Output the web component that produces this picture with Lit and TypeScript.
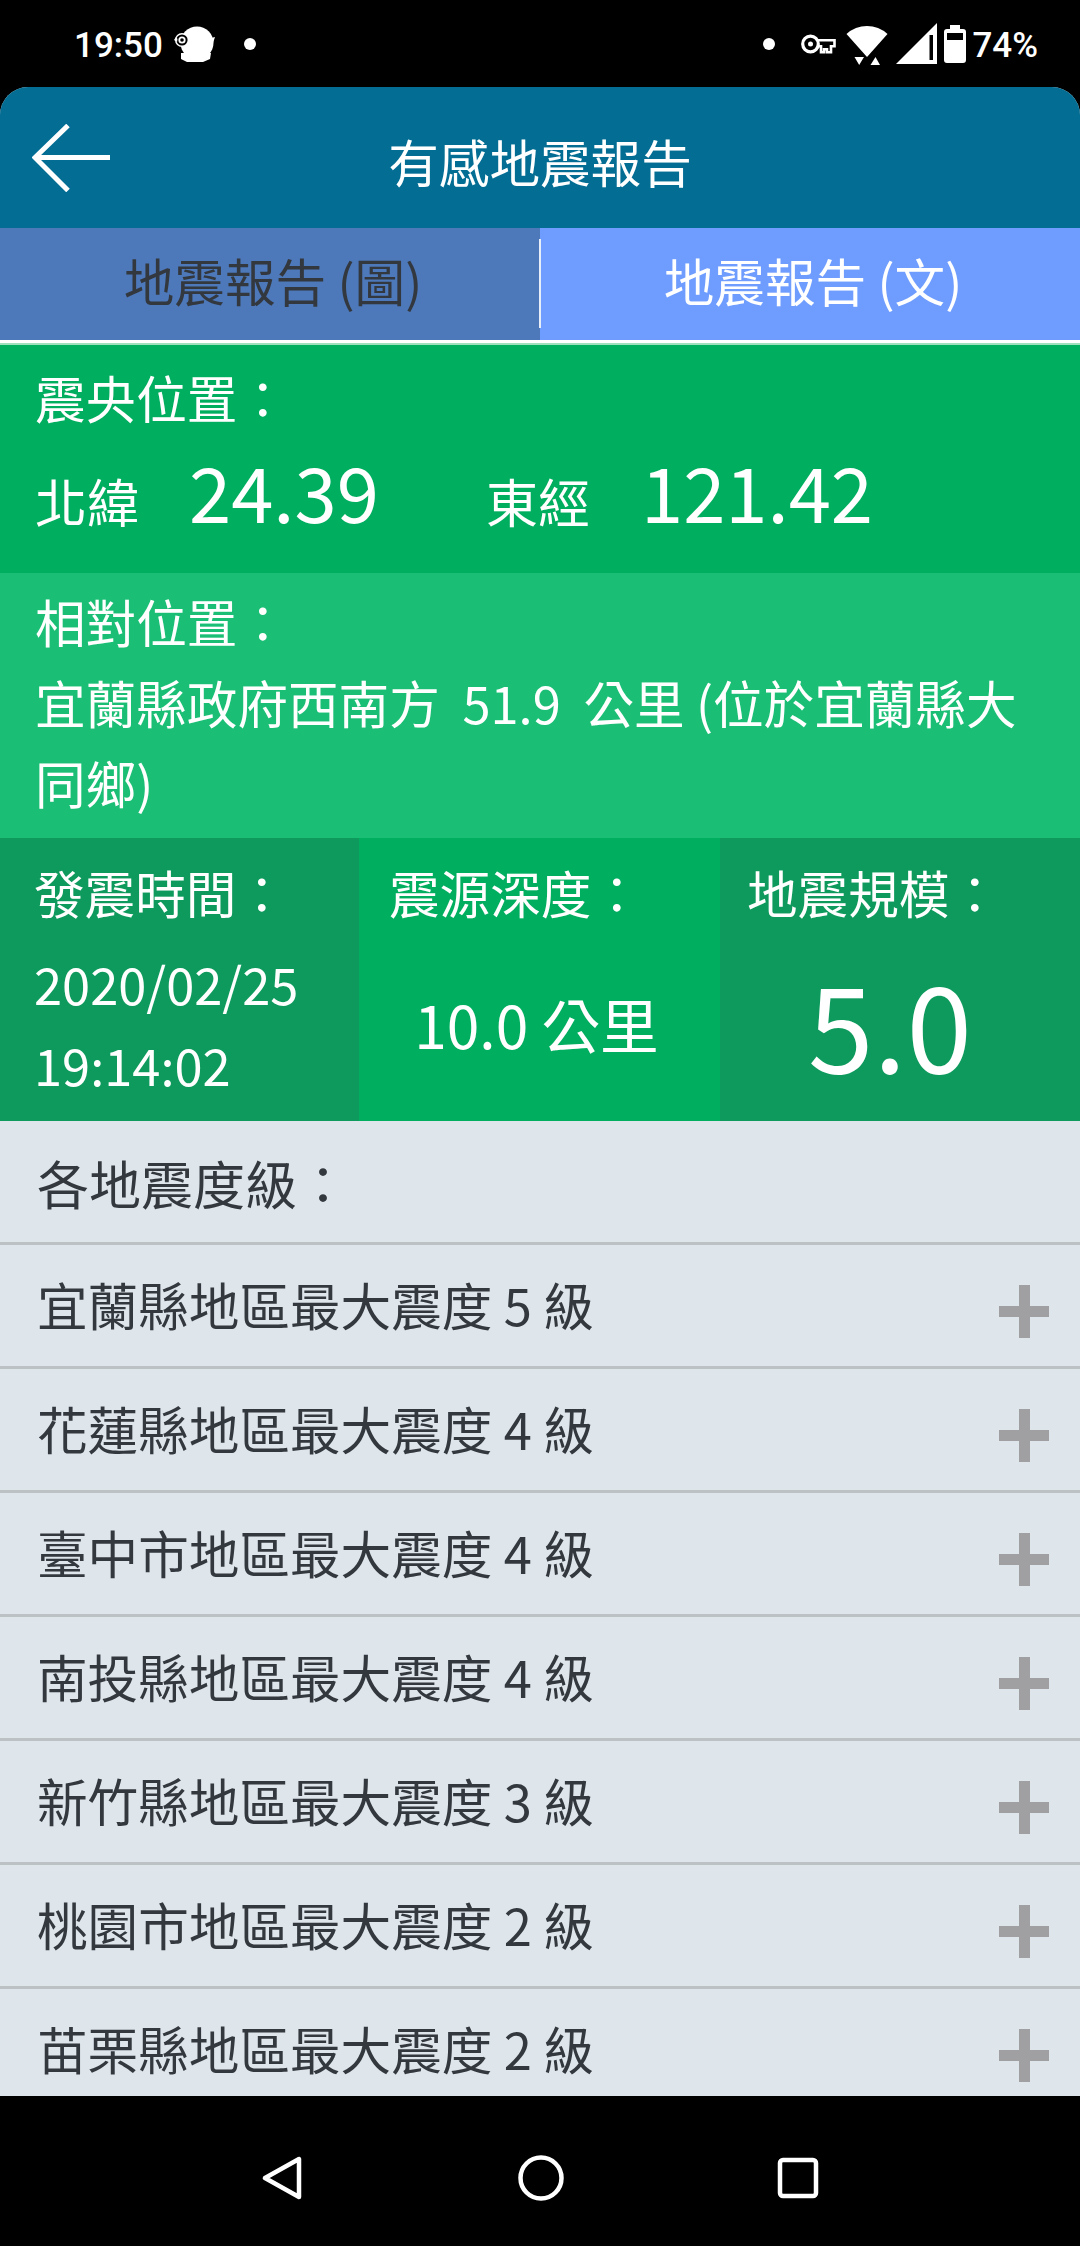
import { LitElement, html, css, svg } from 'lit';
import { customElement } from 'lit/decorators.js';

const REGIONS = [
  ['宜蘭縣', 5],
  ['花蓮縣', 4],
  ['臺中市', 4],
  ['南投縣', 4],
  ['新竹縣', 3],
  ['桃園市', 2],
  ['苗栗縣', 2],
];

const mascotIcon = svg`<svg class="mascot" width="41" height="36" viewBox="0 0 41 36">
  <circle cx="23" cy="17" r="16.500" fill="#fff"/>
  <path d="M7 27h30l-1 6-7 3H13l-6-3zM37 12l4-1-2 6-3 1z" fill="#fff"/>
  <circle cx="8" cy="14" r="7" fill="#fff"/>
  <circle cx="8" cy="14" r="5.600" fill="#000"/>
  <circle cx="8" cy="14" r="3.600" fill="#fff"/>
  <circle cx="8" cy="14" r="1.800" fill="#000"/>
  <path d="M0 14l2-3 1.500 2-.5 3z" fill="#fff"/>
</svg>`;

const keyIcon = svg`<svg class="key" width="35" height="20" viewBox="0 0 35 20">
  <circle cx="9.500" cy="10" r="7.800" fill="none" stroke="#fff" stroke-width="3.200"/>
  <circle cx="9.500" cy="10" r="2.500" fill="#fff"/>
  <path d="M17 6.300h16.500v6h-3.500v6h-4v-3h-3v3h-3v-6H17" fill="none" stroke="#fff" stroke-width="2.600"/>
</svg>`;

const wifiIcon = svg`<svg class="wifi" width="42" height="43" viewBox="0 0 42 43">
  <path d="M.5 12A30 30 0 0 1 41.500 12L21 35z" fill="#fff"/>
  <path d="M8.500 35H18l-4.800 8zM29.500 35L24.500 43H34z" fill="#fff"/>
</svg>`;

const signalIcon = svg`<svg class="signal" width="41" height="41" viewBox="0 0 41 41">
  <path fill-rule="evenodd" d="M0 41 41 0V41zM33.500 12V37H37V12z" fill="#fff"/>
</svg>`;

const batteryIcon = svg`<svg class="battery" width="22" height="38" viewBox="0 0 22 38">
  <path fill-rule="evenodd" d="M6 0H16V4h3a3 3 0 0 1 3 3V35a3 3 0 0 1-3 3H3a3 3 0 0 1-3-3V7A3 3 0 0 1 3 4H6zM3 8v7H19V8z" fill="#fff"/>
</svg>`;

@customElement('app-root')
export class AppRoot extends LitElement {
  static styles = css`
    :host {
      display: block;
      width: 1080px;
      height: 2246px;
      background: #000;
      overflow: hidden;
      font-family: 'Noto Sans CJK TC', 'Noto Sans', sans-serif;
      font-size: 50.6px;
    }

    .status {
      height: 87px;
      display: flex;
      align-items: center;
      padding: 0 42px 0 74px;
      color: #fff;
      font-family: Roboto, sans-serif;
      font-size: 35px;
      font-weight: 500;
    }
    .status .time { margin-right: 11px; padding-top: 3px; }
    .mascot { margin-right: 29px; }
    .dot {
      width: 12px;
      height: 12px;
      border-radius: 50%;
      background: #fff;
    }
    .status .spacer { flex: 1; }
    .status .right {
      display: flex;
      align-items: center;
    }
    .status .right .key { margin-left: 26px; }
    .status .right .wifi { margin-left: 10px; }
    .status .right .signal { margin-left: 8px; }
    .status .right .battery { margin-left: 7px; }
    .status .pct { margin-left: 6px; padding-top: 3px; }

    .app {
      height: 2009px;
      border-radius: 28px 28px 0 0;
      overflow: hidden;
      background: #dee5eb;
    }

    .header {
      position: relative;
      height: 141px;
      box-sizing: border-box;
      padding-top: 8px;
      background: #036d94;
      color: #fff;
      display: flex;
      align-items: center;
      justify-content: center;
    }
    .header .back {
      position: absolute;
      left: 32px;
      top: 37px;
    }
    .header .title { line-height: 1; }

    .tabs {
      display: grid;
      grid-template-columns: 540px 540px;
      height: 112px;
      border-bottom: 3px solid #fff;
      box-shadow: 0 2px 0 #9fe0bd;
      position: relative;
      z-index: 1;
    }
    .tabs::after {
      content: '';
      position: absolute;
      left: 539px;
      top: 11px;
      width: 2px;
      height: 89px;
      background: #e8eef8;
    }
    .tab {
      display: flex;
      align-items: center;
      justify-content: center;
      line-height: 1;
      padding: 0 0 8px 6px;
    }
    .tab.off {
      background: #4d78b9;
      color: #33383f;
    }
    .tab.on {
      background: #6f9dff;
      color: #fff;
    }

    .epicentre {
      height: 230px;
      box-sizing: border-box;
      background: #00ae5f;
      color: #fff;
      padding: 26px 35px 0;
    }
    .epicentre .label { line-height: 56px; }
    .coords {
      display: flex;
      align-items: baseline;
      margin-top: 17px;
      line-height: 96px;
      font-size: 52px;
    }
    .coords .unit { width: 154px; }
    .coords .unit.east { width: 155px; }
    .coords .num {
      font-size: 76px;
      width: 297px;
    }

    .relative {
      height: 265px;
      box-sizing: border-box;
      background: #1abf75;
      color: #fff;
      padding: 20px 35px 0;
      line-height: 80px;
    }
    .relative .label { line-height: 56px; margin-bottom: 13px; }

    .summary {
      display: grid;
      grid-template-columns: 359px 361px 360px;
      height: 283px;
      color: #fff;
    }
    .cell {
      display: flex;
      flex-direction: column;
      padding-top: 26px;
      box-sizing: border-box;
    }
    .cell.dark { background: #0d9a5c; }
    .cell.mid { background: #00ae5f; }
    .cell .label { line-height: 56px; }
    .cell.when { padding-left: 34px; }
    .cell.depth { padding-left: 30px; }
    .cell.scale { padding-left: 27px; }
    .when .value { line-height: 81px; margin-top: 23px; }
    .centre {
      flex: 1;
      display: flex;
      align-items: center;
      justify-content: center;
    }
    .depth .centre {
      margin-left: -30px;
      padding: 6px 6px 0 0;
      font-size: 58.700px;
    }
    .scale .centre {
      margin-left: -27px;
      padding: 2px 20px 0 0;
      font-size: 118px;
      line-height: 1;
    }

    .list { color: #33383f; }
    .list-title {
      height: 121px;
      box-sizing: border-box;
      padding: 32px 35px 0 37px;
      line-height: 60px;
      font-size: 52px;
    }
    .row {
      height: 124px;
      box-sizing: border-box;
      border-top: 3px solid #bcc2c4;
      display: flex;
      align-items: center;
      justify-content: space-between;
      padding: 0 31px 0 37px;
    }
    .row span { line-height: 60px; margin-top: -3px; }
    .plus {
      position: relative;
      width: 50px;
      height: 53px;
      margin-top: 11px;
      flex: none;
    }
    .plus::before,
    .plus::after {
      content: '';
      position: absolute;
      background: #a0a0a2;
    }
    .plus::before { left: 20px; top: 0; width: 11px; height: 53px; }
    .plus::after { left: 0; top: 21px; width: 50px; height: 11px; }

    .nav {
      height: 150px;
      box-sizing: border-box;
      padding-top: 13px;
      background: #000;
      display: flex;
      align-items: center;
      justify-content: center;
    }
    .nav svg { display: block; flex: none; }
    .nav .nav-back { margin-right: 216px; }
    .nav .nav-home { margin-right: 213px; }
  `;

  render() {
    return html`
      <div class="status">
        <span class="time">19:50</span>
        ${mascotIcon}
        <span class="dot"></span>
        <span class="spacer"></span>
        <div class="right">
          <span class="dot"></span>
          ${keyIcon}${wifiIcon}${signalIcon}${batteryIcon}
          <span class="pct">74%</span>
        </div>
      </div>

      <div class="app">
        <div class="header">
          <svg class="back" width="80" height="68" viewBox="0 0 80 68">
            <path d="M78 33.500H4M36 1.500 3 33.500l33 33" fill="none" stroke="#fff" stroke-width="5"/>
          </svg>
          <span class="title">有感地震報告</span>
        </div>

        <div class="tabs">
          <div class="tab off">地震報告 (圖)</div>
          <div class="tab on">地震報告 (文)</div>
        </div>

        <div class="epicentre">
          <div class="label">震央位置：</div>
          <div class="coords">
            <span class="unit">北緯</span>
            <span class="num">24.39</span>
            <span class="unit east">東經</span>
            <span class="num">121.42</span>
          </div>
        </div>

        <div class="relative">
          <div class="label">相對位置：</div>
          <div>宜蘭縣政府西南方 &nbsp;51.9 &nbsp;公里 (位於宜蘭縣大同鄉)</div>
        </div>

        <div class="summary">
          <div class="cell dark when">
            <div class="label">發震時間：</div>
            <div class="value">2020/02/25<br />19:14:02</div>
          </div>
          <div class="cell mid depth">
            <div class="label">震源深度：</div>
            <div class="centre">10.0 公里</div>
          </div>
          <div class="cell dark scale">
            <div class="label">地震規模：</div>
            <div class="centre">5.0</div>
          </div>
        </div>

        <div class="list">
          <div class="list-title">各地震度級：</div>
          ${REGIONS.map(
            ([name, level]) => html`
              <div class="row">
                <span>${name}地區最大震度 ${level} 級</span>
                <div class="plus"></div>
              </div>
            `
          )}
        </div>
      </div>

      <div class="nav">
        <svg class="nav-back" width="40" height="44" viewBox="0 0 40 44">
          <path d="M37 3V41L3 22z" fill="none" stroke="#fff" stroke-width="4.500" stroke-linejoin="round"/>
        </svg>
        <svg class="nav-home" width="46" height="46" viewBox="0 0 46 46">
          <circle cx="23" cy="23" r="20.500" fill="none" stroke="#fff" stroke-width="4.500"/>
        </svg>
        <svg width="42" height="42" viewBox="0 0 42 42">
          <rect x="3" y="3" width="36" height="36" rx="3" fill="none" stroke="#fff" stroke-width="4.500"/>
        </svg>
      </div>
    `;
  }
}
